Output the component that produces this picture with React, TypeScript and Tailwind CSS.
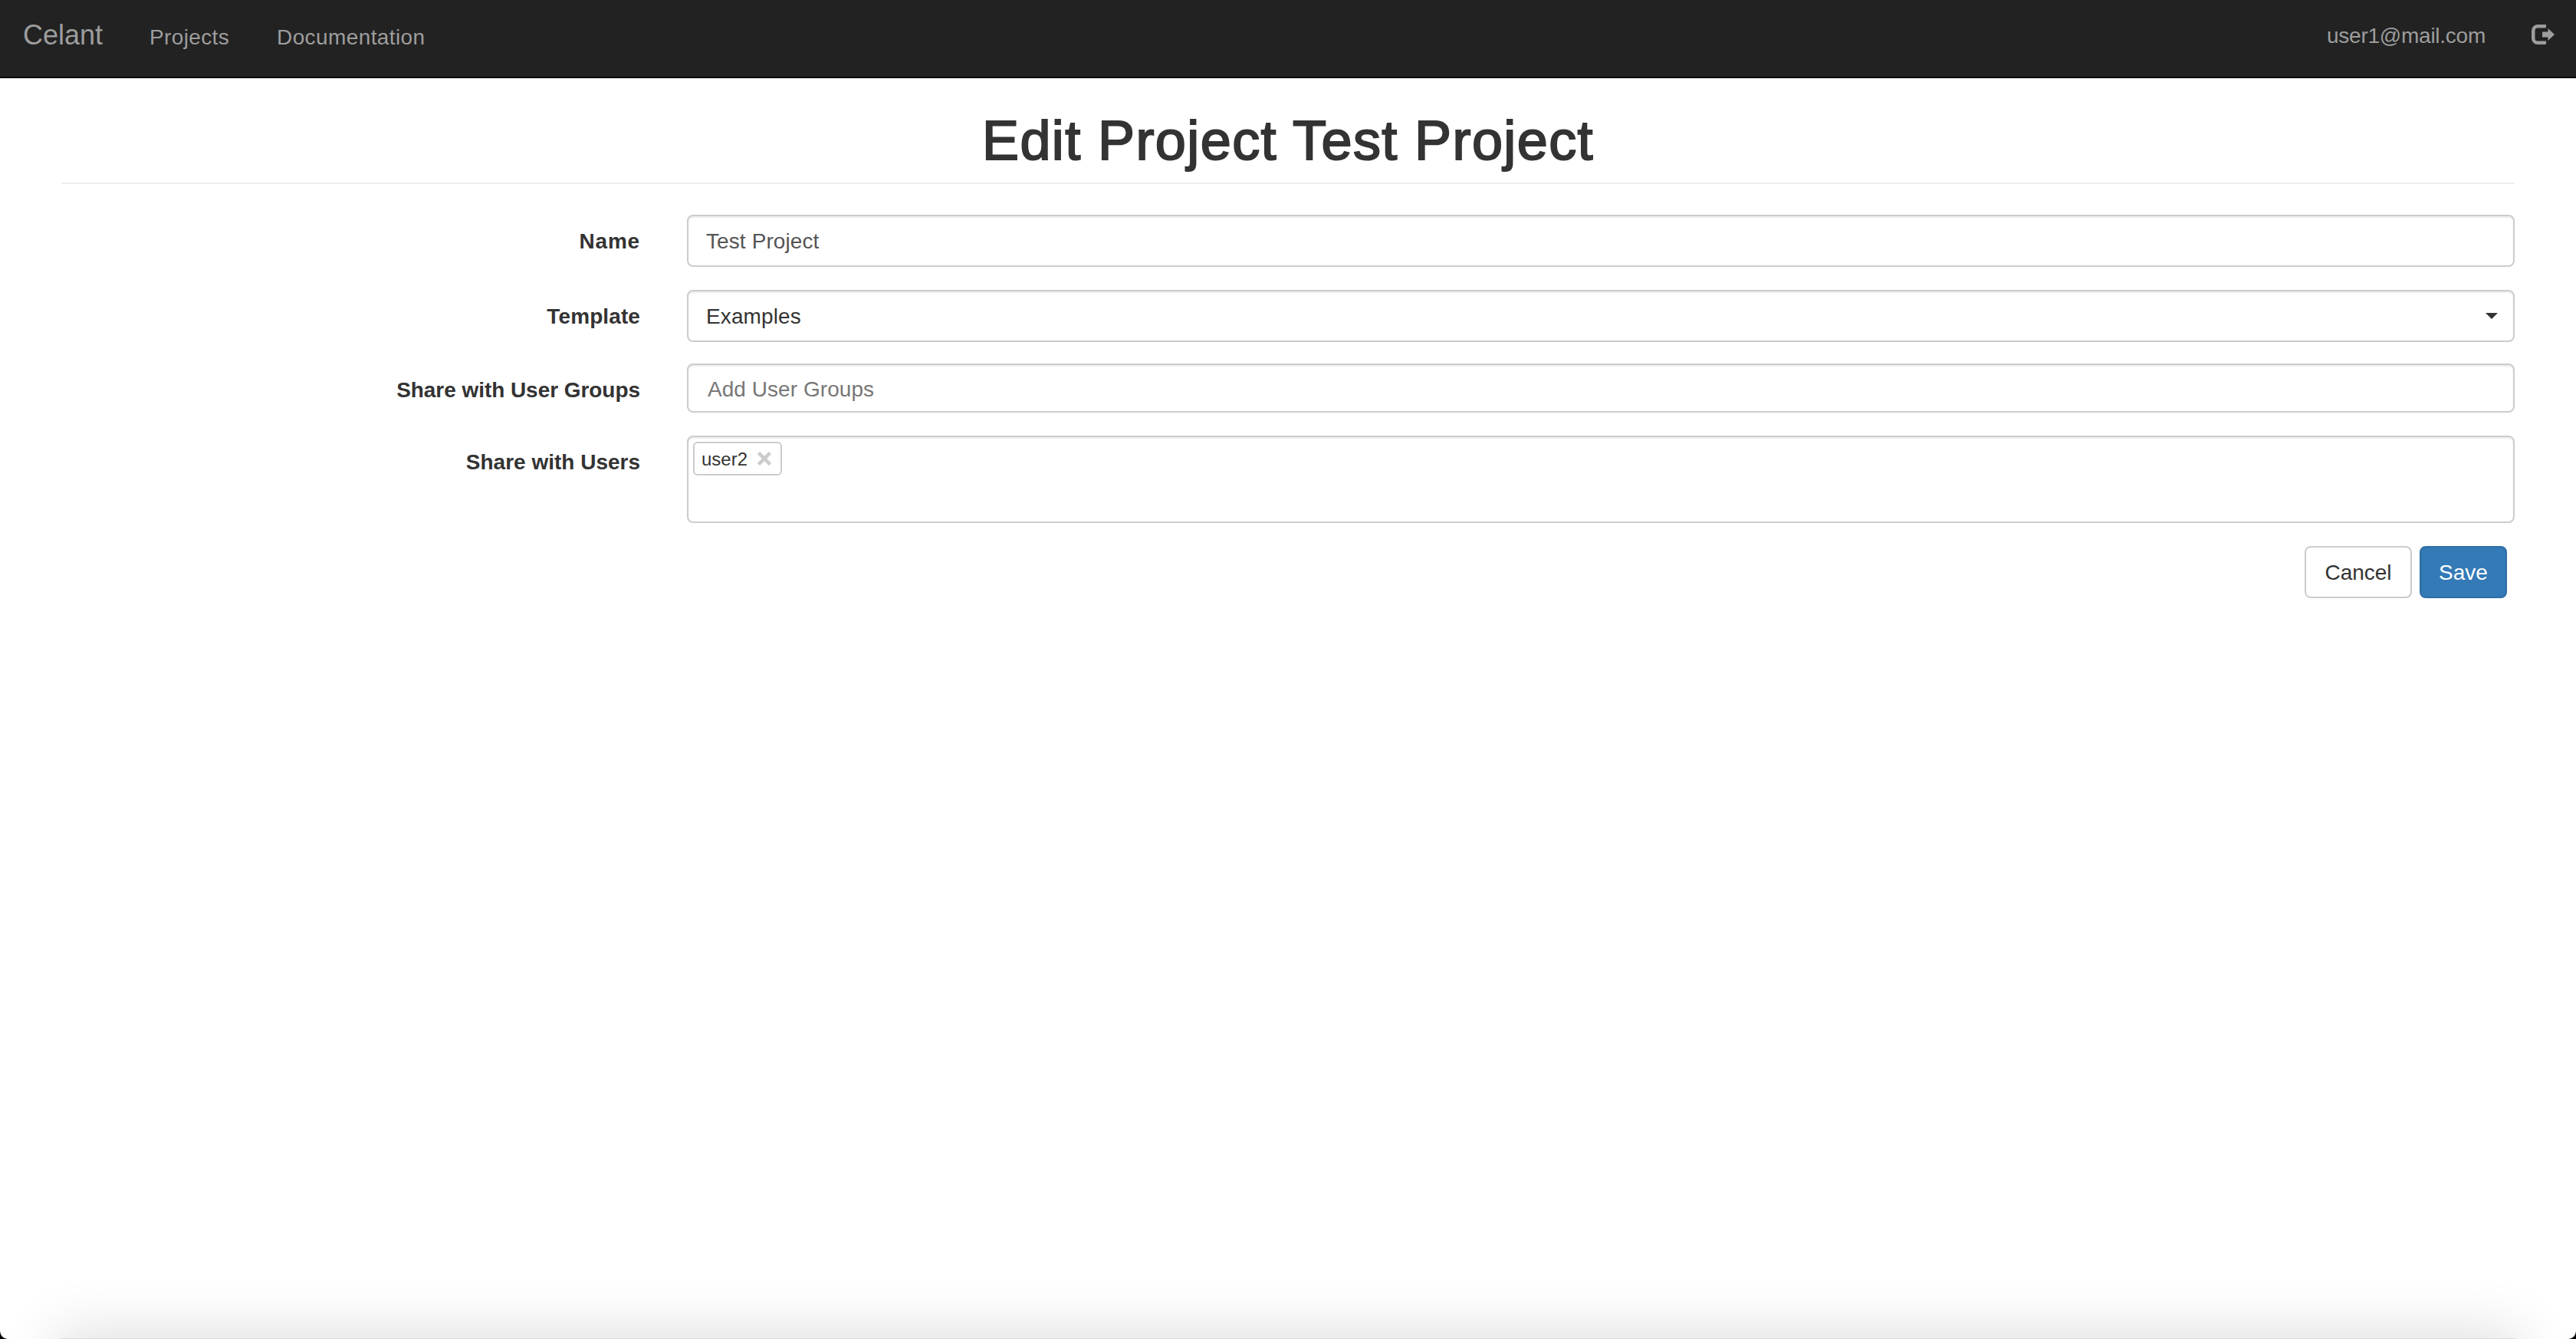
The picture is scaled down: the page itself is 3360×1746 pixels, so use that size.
import { useState } from "react";
import type { ReactNode } from "react";

const NAV_LINKS = [
  { label: "Projects", className: "ml-[61px] tracking-[0.35px]" },
  { label: "Documentation", className: "ml-[62px] tracking-[0.4px]" },
];

const controlClass =
  "w-full rounded-[8px] border-2 border-[#ccc] bg-white shadow-[inset_0_2px_2px_rgba(0,0,0,0.075)]";

function LogOutIcon() {
  return (
    <svg width="30" height="26" viewBox="0 0 30 26" fill="currentColor">
      <path d="M19 0H8A8 8 0 0 0 0 8V18A8 8 0 0 0 8 26H17.500Q19 26 19 24.500V21.500H8A3.500 3.500 0 0 1 4.500 18V8A3.500 3.500 0 0 1 8 4.500H17.500Q19 4.500 19 3Z" />
      <path d="M21.500 5L30 13L21.500 21V16.500H14V9.500H21.500Z" />
    </svg>
  );
}

function Navbar() {
  return (
    <nav className="flex h-[102px] items-start justify-between border-b-2 border-[#080808] bg-[#222] text-[#9d9d9d]">
      <div className="flex items-baseline pl-[30px] pt-[26px]">
        <a href="#" className="text-[36px] leading-[40px]">
          Celant
        </a>
        {NAV_LINKS.map((link) => (
          <a key={link.label} href="#" className={link.className}>
            {link.label}
          </a>
        ))}
      </div>
      <div className="flex items-start pr-[28px]">
        <span className="pt-[27px] tracking-[-0.25px]">user1@mail.com</span>
        <button type="button" aria-label="Log out" className="ml-[60px] pt-[32px]">
          <LogOutIcon />
        </button>
      </div>
    </nav>
  );
}

interface FormRowProps {
  label: string;
  labelClass?: string;
  children: ReactNode;
}

function FormRow({ label, labelClass = "", children }: FormRowProps) {
  return (
    <div className="flex">
      <label className={`w-[755px] shrink-0 pt-[15px] text-right font-bold ${labelClass}`}>
        {label}
      </label>
      <div className="ml-[61px] flex-1">{children}</div>
    </div>
  );
}

export default function App() {
  const [name, setName] = useState("Test Project");
  const [users, setUsers] = useState(["user2"]);

  const removeUser = (user: string) => {
    setUsers(users.filter((u) => u !== user));
  };

  return (
    <div className="relative h-[1746px] w-[3360px] overflow-hidden bg-white font-['Liberation_Sans',Arial,sans-serif] text-[28px] leading-[40px] text-[#333]">
      <Navbar />
      <main className="px-[80px] pt-[41px]">
        <h1 className="h-[97px] border-b-2 border-[#eee] text-center text-[72px] leading-[80px] tracking-[1.4px] [-webkit-text-stroke:2px_#333]">
          Edit Project Test Project
        </h1>

        <form className="pt-[40px]" onSubmit={(e) => e.preventDefault()}>
          <FormRow label="Name" labelClass="tracking-[0.8px]">
            <input
              type="text"
              value={name}
              onChange={(e) => setName(e.target.value)}
              className={`${controlClass} block h-[68px] px-[23px] pt-[2px] tracking-[0.1px] text-[#555]`}
            />
          </FormRow>

          <div className="mt-[30px]">
            <FormRow label="Template" labelClass="tracking-[0.1px]">
              <button
                type="button"
                className={`${controlClass} flex h-[68px] items-center justify-between pl-[23px] pr-[20px] text-left`}
              >
                <span className="pt-[2px] tracking-[0.1px]">Examples</span>
                <svg width="16" height="8" viewBox="0 0 16 8" fill="currentColor">
                  <path d="M0 0H16L8 8Z" />
                </svg>
              </button>
            </FormRow>
          </div>

          <div className="mt-[28px]">
            <FormRow label="Share with User Groups" labelClass="tracking-[-0.05px]">
              <input
                type="text"
                placeholder="Add User Groups"
                className={`${controlClass} block h-[64px] px-[25px] pt-[4px] tracking-[0.05px] placeholder:text-[#777]`}
              />
            </FormRow>
          </div>

          <div className="mt-[30px]">
            <FormRow label="Share with Users">
              <div className={`${controlClass} flex h-[114px] items-start p-[6px]`}>
                {users.map((user) => (
                  <span
                    key={user}
                    className="flex h-[44px] w-[116px] items-center rounded-[6px] border-2 border-[#ccc] pl-[9px] text-[24px] leading-[40px]"
                  >
                    <span className="pt-[2px]">{user}</span>
                    <button
                      type="button"
                      aria-label={`Remove ${user}`}
                      onClick={() => removeUser(user)}
                      className="ml-[13px] text-[#ccc]"
                    >
                      <svg width="18" height="18" viewBox="0 0 18 18" stroke="currentColor" strokeWidth="4.500">
                        <path d="M1.500 1.500L16.500 16.500M16.500 1.500L1.500 16.500" />
                      </svg>
                    </button>
                  </span>
                ))}
              </div>
            </FormRow>
          </div>

          <div className="mt-[30px] flex justify-end gap-[10px] pr-[10px]">
            <button
              type="button"
              className="h-[68px] w-[140px] rounded-[8px] border-2 border-[#ccc] bg-white pt-[2px]"
            >
              Cancel
            </button>
            <button
              type="submit"
              className="h-[68px] w-[114px] rounded-[8px] border-2 border-[#2e6da4] bg-[#337ab7] pt-[2px] text-white"
            >
              Save
            </button>
          </div>
        </form>
      </main>

      {/* soft shadow along the bottom edge of the window */}
      <div className="pointer-events-none absolute inset-x-[78px] top-[1745px] h-[200px] bg-[#dedede] shadow-[0_0_76px_6px_rgba(0,0,0,0.14)]" />
      <svg className="absolute bottom-0 left-0" width="10" height="10" viewBox="0 0 10 10">
        <path d="M0 0Q1 9 10 10H0Z" />
      </svg>
      <svg className="absolute bottom-0 right-0" width="10" height="10" viewBox="0 0 10 10">
        <path d="M10 0Q9 9 0 10H10Z" />
      </svg>
    </div>
  );
}
